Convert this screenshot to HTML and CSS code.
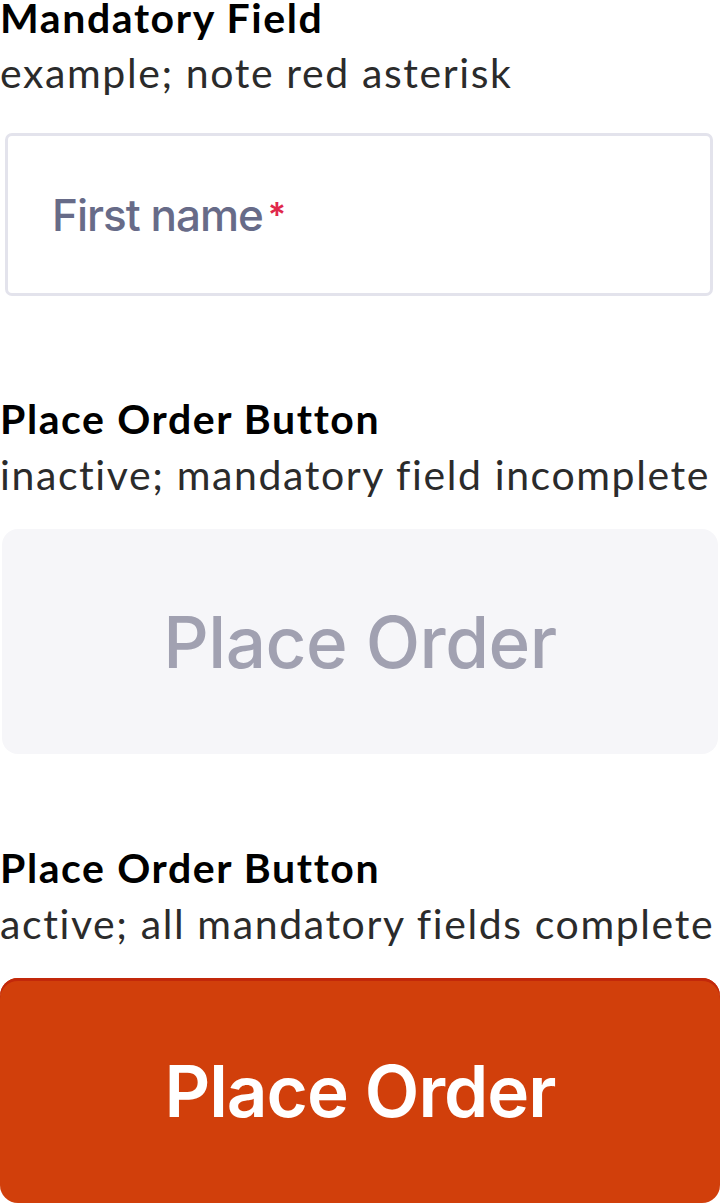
FILE: index.html
```html
<!DOCTYPE html>
<html lang="en">
<head>
    <meta charset="UTF-8">
    <meta name="viewport" content="width=device-width, initial-scale=1.0">
    <title>Checkout states</title>
    <link rel="stylesheet" href="styles.css">
</head>
<body>
    <div class="sheet">
        <div class="spec spec-field">
            <div class="spec-title">Mandatory Field</div>
            <div class="spec-note">example; note red asterisk</div>
            <div class="field">
                <span class="field-label">First name</span><span class="req">*</span>
            </div>
        </div>

        <div class="spec spec-idle">
            <div class="spec-title">Place Order Button</div>
            <div class="spec-note">inactive; mandatory field incomplete</div>
            <button class="order-btn" disabled>Place Order</button>
        </div>

        <div class="spec spec-ready">
            <div class="spec-title">Place Order Button</div>
            <div class="spec-note">active; all mandatory fields complete</div>
            <button class="order-btn active">Place Order</button>
        </div>
    </div>
</body>
</html>
```

FILE: styles.css
```css
body {
    margin: 0;
    background: #ffffff;
    font-family: Lato, "Open Sans", sans-serif;
    font-variant-ligatures: none;
    overflow: hidden;
}
.spec-title {
    font-size: 41px;
    line-height: 56px;
    font-weight: 700;
    color: #000000;
    letter-spacing: 1.6px;
}
.spec-note {
    font-size: 41px;
    line-height: 56px;
    color: #2b2b2b;
    letter-spacing: 1.6px;
}
.spec-field .spec-title {
    line-height: 36px;
    margin-bottom: 9px;
}
.spec-idle {
    margin-top: 95px;
}
.spec-ready {
    margin-top: 86px;
}
.field {
    display: flex;
    align-items: center;
    margin: 32px 7px 0 5px;
    height: 163px;
    box-sizing: border-box;
    border: 3px solid #e3e3ec;
    border-radius: 7px;
    padding-left: 44px;
    font-family: Inter, Roboto, sans-serif;
}
.field-label {
    font-size: 44px;
    font-weight: 500;
    color: #676b88;
    letter-spacing: -1px;
}
.req {
    align-self: flex-start;
    margin-top: 62px;
    margin-left: 5px;
    font-size: 34px;
    line-height: 34px;
    font-weight: 600;
    color: #e0284b;
}
.order-btn {
    display: block;
    margin-top: 26px;
    border: none;
    font-family: Inter, Roboto, sans-serif;
    font-size: 71px;
    font-weight: 500;
    letter-spacing: -0.5px;
}
.order-btn[disabled] {
    width: 716px;
    height: 225px;
    margin-left: 2px;
    border-radius: 16px;
    background: #f6f6f9;
    color: #a1a1b1;
}
.order-btn.active {
    width: 720px;
    height: 225px;
    border-radius: 18px;
    background: #d13f0b;
    box-shadow: inset 0 3px 0 #c2280a;
    color: #ffffff;
    font-weight: 600;
    letter-spacing: -1px;
}
```
